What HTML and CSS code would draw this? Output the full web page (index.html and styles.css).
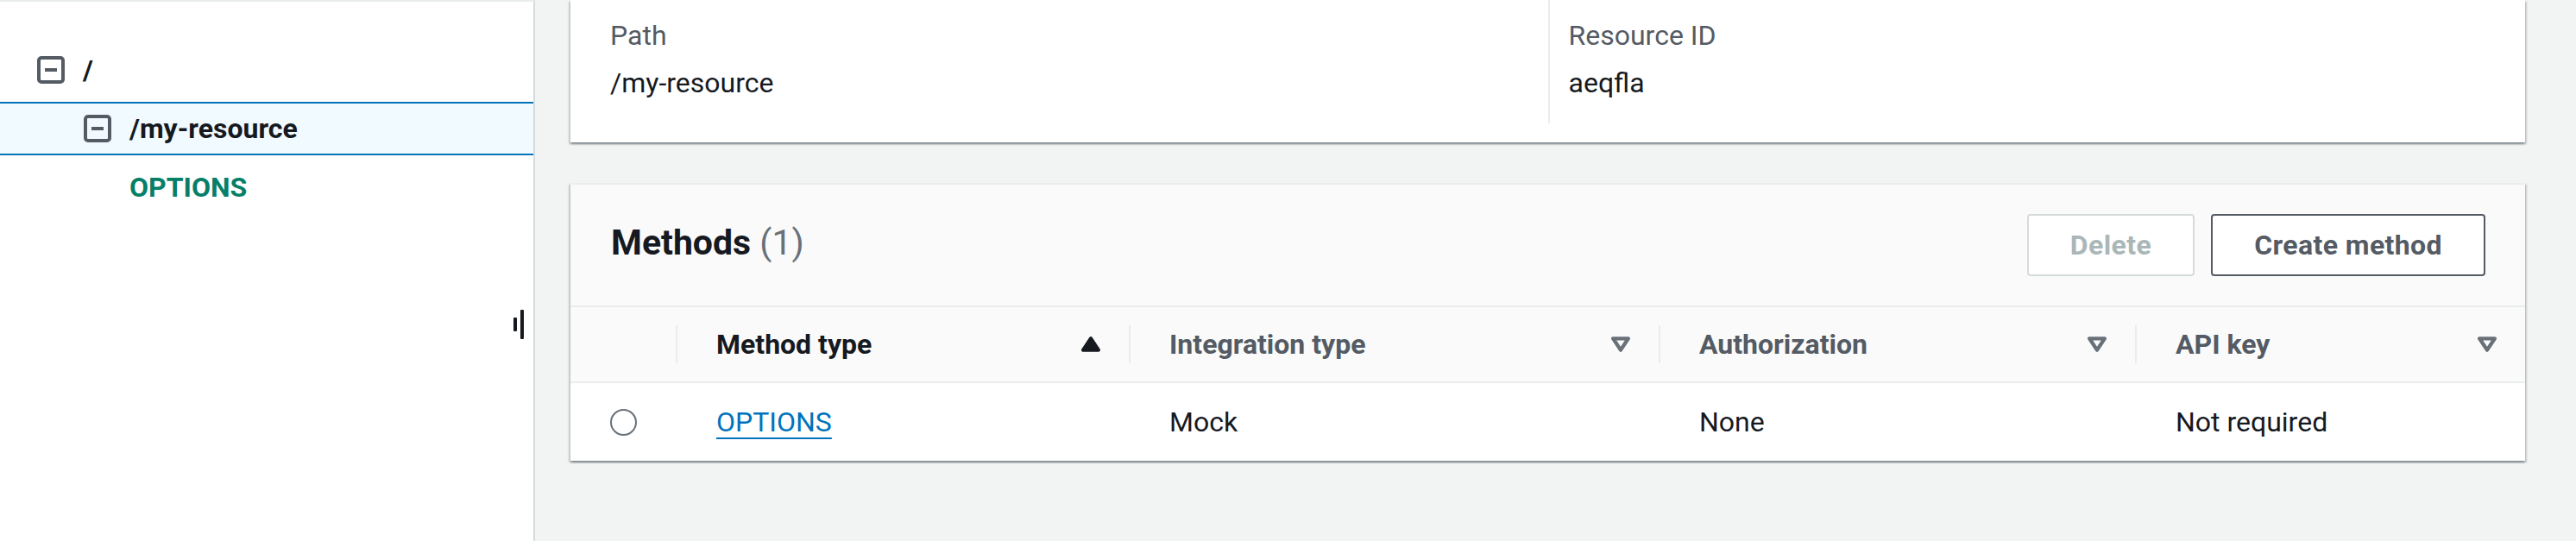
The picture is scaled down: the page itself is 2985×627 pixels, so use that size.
FILE: index.html
```html
<!DOCTYPE html>
<html lang="en">
<head>
<meta charset="utf-8">
<title>Resources</title>
<link rel="stylesheet" href="styles.css">
</head>
<body>
<aside class="sidebar">
  <div class="tree">
    <div class="tree-row level-0">
      <svg class="toggle" viewBox="0 0 32 32" width="32" height="32"><rect x="2" y="2" width="28" height="28" rx="3" /><line x1="9" y1="16" x2="23" y2="16" /></svg>
      <span class="node-name">/</span>
    </div>
    <div class="tree-row level-1 selected">
      <svg class="toggle" viewBox="0 0 32 32" width="32" height="32"><rect x="2" y="2" width="28" height="28" rx="3" /><line x1="9" y1="16" x2="23" y2="16" /></svg>
      <span class="node-name">/my-resource</span>
    </div>
    <div class="tree-row level-2">
      <span class="method-name">OPTIONS</span>
    </div>
  </div>
  <div class="resize-handle"><span class="bar short"></span><span class="bar tall"></span></div>
</aside>

<main class="content">
  <section class="card details">
    <div class="detail-col">
      <div class="label">Path</div>
      <div class="value">/my-resource</div>
    </div>
    <div class="detail-col divided">
      <div class="label">Resource ID</div>
      <div class="value">aeqfla</div>
    </div>
  </section>

  <section class="card methods">
    <header class="methods-header">
      <h2 class="title">Methods <span class="count">(1)</span></h2>
      <div class="actions">
        <button class="btn disabled">Delete</button>
        <button class="btn">Create method</button>
      </div>
    </header>
    <div class="grid-table">
      <div class="thead">
        <div class="th select"></div>
        <div class="th sorted"><span>Method type</span>
          <svg class="sort" viewBox="3 4 10 8" width="22" height="18"><path d="M4 11h8L8 5l-4 6z" class="filled"/></svg>
        </div>
        <div class="th"><span>Integration type</span>
          <svg class="sort" viewBox="3 4 10 8" width="22" height="18"><path d="M4 5h8l-4 6-4-6z"/></svg>
        </div>
        <div class="th"><span>Authorization</span>
          <svg class="sort" viewBox="3 4 10 8" width="22" height="18"><path d="M4 5h8l-4 6-4-6z"/></svg>
        </div>
        <div class="th"><span>API key</span>
          <svg class="sort" viewBox="3 4 10 8" width="22" height="18"><path d="M4 5h8l-4 6-4-6z"/></svg>
        </div>
      </div>
      <div class="trow">
        <div class="td select"><span class="radio"></span></div>
        <div class="td"><a class="link" href="#">OPTIONS</a></div>
        <div class="td">Mock</div>
        <div class="td">None</div>
        <div class="td">Not required</div>
      </div>
    </div>
  </section>
</main>
</body>
</html>
```

FILE: styles.css
```css
* { box-sizing: border-box; }

html, body {
  margin: 0;
  height: 627px;
}

body {
  display: flex;
  background: #f2f3f3;
  font-family: Roboto, "Liberation Sans", sans-serif;
  font-size: 32px;
  line-height: 50px;
  color: #16191f;
  overflow: hidden;
}

/* ---------- sidebar tree ---------- */
.sidebar {
  position: relative;
  width: 620px;
  flex: none;
  background: #fff;
  border-top: 2px solid #eaeded;
  border-right: 2px solid #d5dbdb;
  padding-top: 48px;
}

.tree {
  display: flex;
  flex-direction: column;
  gap: 6px;
}

.tree-row {
  display: flex;
  align-items: center;
  gap: 21px;
  height: 62px;
  font-weight: 700;
}

.level-0 { padding-left: 43px; }
.level-1 { padding-left: 97px; }
.level-2 { padding-left: 150px; }

.tree-row.selected {
  background: #f1faff;
  border-top: 2px solid #0073bb;
  border-bottom: 2px solid #0073bb;
}

.toggle {
  flex: none;
  fill: none;
  stroke: #545b64;
  stroke-width: 4;
}

.method-name {
  color: #067f68;
}

.resize-handle {
  position: absolute;
  left: 595px;
  top: 356px;
  display: flex;
  align-items: center;
  gap: 4px;
  height: 36px;
}

.bar {
  display: block;
  width: 4px;
  background: #16191f;
  border-radius: 1px;
}
.bar.short { height: 16px; }
.bar.tall { height: 34px; }

/* ---------- main content ---------- */
.content {
  flex: 1;
  display: flex;
  flex-direction: column;
  gap: 47px;
  padding: 0 59px 0 41px;
}

.card {
  background: #fff;
  box-shadow: 0 2px 2px 0 rgba(0, 28, 36, 0.3),
              2px 2px 2px 0 rgba(0, 28, 36, 0.15),
              -2px 2px 2px 0 rgba(0, 28, 36, 0.15);
}

.details {
  display: grid;
  grid-template-columns: 1fr 1fr;
  padding-bottom: 22px;
}

.detail-col {
  padding: 16px 22px 22px 46px;
}

.detail-col.divided {
  border-left: 2px solid #eaeded;
  padding-left: 22px;
}

.label {
  color: #545b64;
  margin-bottom: 5px;
}

/* ---------- methods card ---------- */
.methods {
  border-top: 2px solid #eaeded;
}

.methods-header {
  display: flex;
  align-items: center;
  justify-content: space-between;
  height: 142px;
  padding: 0 46px 0 47px;
  background: #fafafa;
  border-bottom: 2px solid #eaeded;
}

.title {
  margin: 0 0 6px 0;
  font-size: 41px;
  line-height: 50px;
  font-weight: 700;
}

.count {
  font-weight: 400;
  color: #687078;
}

.actions {
  display: flex;
  gap: 19px;
}

.btn {
  height: 72px;
  padding: 0 48px;
  font-family: inherit;
  font-size: 32px;
  font-weight: 700;
  letter-spacing: 0.4px;
  background: #fff;
  color: #545b64;
  border: 2px solid #545b64;
  border-radius: 4px;
}

.btn.disabled {
  color: #aab7b8;
  border-color: #d5dbdb;
}

.grid-table {
  display: flex;
  flex-direction: column;
}

.thead,
.trow {
  display: grid;
  grid-template-columns: 122px 525px 614px 552px 1fr;
  align-items: center;
}

.thead {
  height: 88px;
  background: #fafafa;
  border-bottom: 2px solid #eaeded;
}

.th {
  display: flex;
  align-items: center;
  justify-content: space-between;
  height: 44px;
  padding: 0 33px 0 45px;
  border-left: 2px solid #eaeded;
  font-weight: 700;
  color: #545b64;
}

.th.select {
  border-left: none;
}

.th.sorted {
  color: #16191f;
}

.sort {
  flex: none;
  fill: none;
  stroke: #687078;
  stroke-width: 2;
  stroke-linejoin: round;
}

.sort .filled {
  fill: #16191f;
  stroke: #16191f;
}

.trow {
  height: 90px;
  background: #fff;
}

.td {
  padding-left: 47px;
}

.td.select {
  padding-left: 46px;
  display: flex;
  align-items: center;
}

.radio {
  display: block;
  width: 31px;
  height: 31px;
  border: 2.5px solid #687078;
  border-radius: 50%;
}

.link {
  color: #0073bb;
  text-decoration: underline;
  text-decoration-thickness: 2px;
  text-underline-offset: 7px;
}
```
